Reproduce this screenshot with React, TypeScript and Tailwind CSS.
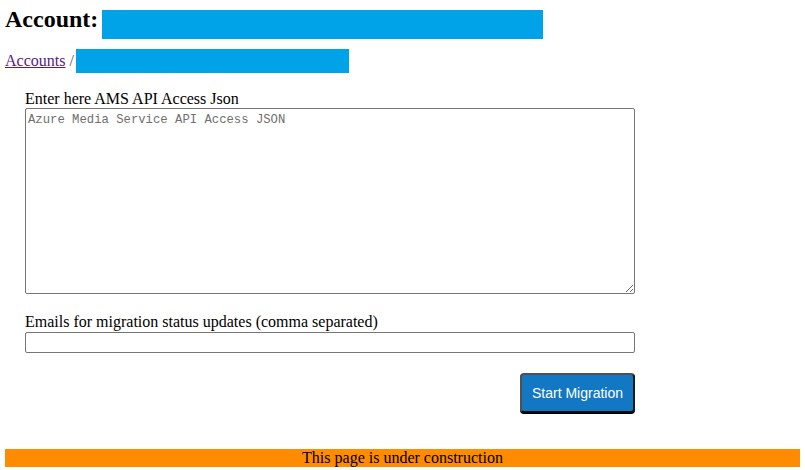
import React from "react";

export default function App() {
  return (
    <div className="p-[5px] bg-white text-black min-h-[470px]" style={{ fontFamily: '"Liberation Serif", "Times New Roman", serif' }}>
      <div className="flex items-start h-[39px]">
        <span className="text-[24px] font-bold leading-[28px]">Account:</span>
        <div className="ml-[4px] mt-[5px] w-[441px] h-[29px] bg-[#00a2e8]" />
      </div>
      <div className="flex items-start mt-[5px] h-[24px]">
        <a href="#" className="text-[16px] leading-[18px] mt-[3px] text-[#551a8b] underline">Accounts</a>
        <span className="text-[16px] leading-[18px] mt-[3px] text-[#555] ml-[4px]">/</span>
        <div className="ml-[2px] w-[273px] h-[24px] bg-[#00a2e8]" />
      </div>
      <div className="ml-[20px] mt-[16px] w-[610px] flex flex-col">
        <label className="text-[16px] leading-[19px]">Enter here AMS API Access Json</label>
        <textarea
          className="block w-[610px] h-[186px] border border-[#767676] rounded-[2px] px-[2px] pt-[3px] pb-[2px] text-[12.25px] leading-[16px] placeholder:text-[#6f6f6f] outline-none resize"
          style={{ fontFamily: '"Liberation Mono", Consolas, monospace' }}
          placeholder="Azure Media Service API Access JSON"
        />
        <label className="mt-[18px] text-[16px] leading-[20px]">Emails for migration status updates (comma separated)</label>
        <input
          className="block w-[610px] h-[21px] border border-[#767676] rounded-[2px] px-[2px] text-[13px] outline-none"
          type="text"
        />
        <div className="flex justify-end mt-[20px]">
          <button
            className="w-[115px] h-[40px] bg-[#1378c3] text-white text-[14px] rounded-[4px] border-2 border-[#505050] border-b-[#0a0a0a] border-r-[#1a1a1a] shadow-[0_1px_0_#000]"
            style={{ fontFamily: '"Liberation Sans", Arial, sans-serif' }}
          >
            Start Migration
          </button>
        </div>
      </div>
      <div className="mt-[36px] h-[18px] bg-[#ff8c00] text-center text-[16px] leading-[18px]">
        This page is under construction
      </div>
    </div>
  );
}
